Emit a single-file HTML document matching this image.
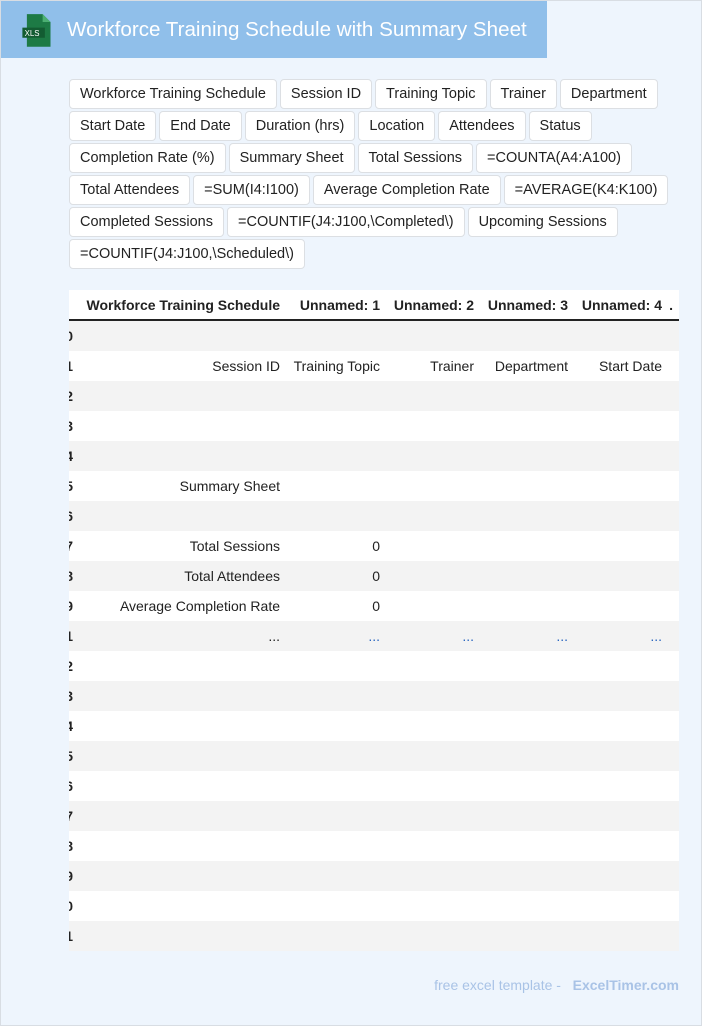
<!DOCTYPE html>
<html><head><meta charset="utf-8"><style>
*{box-sizing:border-box;margin:0;padding:0}
body{width:702px;height:1026px;background:#eef5fd;font-family:"Liberation Sans",Arial,sans-serif;position:relative;overflow:hidden;border:1px solid #d8dde3}
.hdr{position:absolute;left:0;top:0;width:546px;height:57px;background:#90bfea;color:#fff;font-size:20.6px;line-height:57px;padding-left:66px}
.icon{position:absolute;left:20px;top:12px}
.tags{position:absolute;left:68px;top:78px;width:610px;display:flex;flex-wrap:wrap;gap:2px 3px}
.tag{background:#fff;border:1px solid #dcdfe3;border-radius:4px;height:30px;line-height:28px;padding:0 10px;font-size:14.5px;color:#222}
.tbl{position:absolute;left:68px;top:289px;width:610px;overflow:hidden;font-size:14px;color:#222}
.row{height:30px;display:flex;position:relative}
.row div{line-height:30px;text-align:right;padding-right:6px;flex:none}
.c0{width:217px}.c1{width:100px}.c2{width:94px}.c3{width:94px}.c4{width:94px}.c5{width:11px}
.h{font-weight:bold;border-bottom:2px solid #222;height:31px;background:#fff}
.g{background:#f3f3f3}.w{background:#fff}
.ix{position:absolute;left:-4px;top:0;font-weight:bold;width:8px;text-align:right!important;padding:0!important}
.dot{color:#2a66c0}
.foot{position:absolute;right:22px;top:976px;font-size:14px;color:#a9c3e6}
</style></head><body>
<div class="hdr">Workforce Training Schedule with Summary Sheet</div>
<svg class="icon" width="32" height="36" viewBox="0 0 28 32"><path d="M5 1h14l7 7v22H5z" fill="#1d7a45"/><path d="M19 1v7h7z" fill="#4caf72"/><rect x="1" y="13" width="20" height="9" fill="#135c32"/><text x="3" y="20.5" font-size="7" fill="#fff" font-family="Liberation Sans">XLS</text></svg>
<div class="tags">
<span class="tag">Workforce Training Schedule</span><span class="tag">Session ID</span><span class="tag">Training Topic</span><span class="tag">Trainer</span><span class="tag">Department</span>
<span class="tag">Start Date</span><span class="tag">End Date</span><span class="tag">Duration (hrs)</span><span class="tag">Location</span><span class="tag">Attendees</span><span class="tag">Status</span>
<span class="tag">Completion Rate (%)</span><span class="tag">Summary Sheet</span><span class="tag">Total Sessions</span><span class="tag">=COUNTA(A4:A100)</span>
<span class="tag">Total Attendees</span><span class="tag">=SUM(I4:I100)</span><span class="tag">Average Completion Rate</span><span class="tag">=AVERAGE(K4:K100)</span>
<span class="tag">Completed Sessions</span><span class="tag">=COUNTIF(J4:J100,\Completed\)</span><span class="tag">Upcoming Sessions</span>
<span class="tag">=COUNTIF(J4:J100,\Scheduled\)</span>
</div>
<div class="tbl">
<div class="row h"><div class="c0">Workforce Training Schedule</div><div class="c1">Unnamed: 1</div><div class="c2">Unnamed: 2</div><div class="c3">Unnamed: 3</div><div class="c4">Unnamed: 4</div><div class="c5">.</div></div>
<div class="row g"><span class="ix" style="line-height:30px">0</span></div>
<div class="row w"><span class="ix" style="line-height:30px">1</span><div class="c0">Session ID</div><div class="c1">Training Topic</div><div class="c2">Trainer</div><div class="c3">Department</div><div class="c4">Start Date</div></div>
<div class="row g"><span class="ix" style="line-height:30px">2</span></div>
<div class="row w"><span class="ix" style="line-height:30px">3</span></div>
<div class="row g"><span class="ix" style="line-height:30px">4</span></div>
<div class="row w"><span class="ix" style="line-height:30px">5</span><div class="c0">Summary Sheet</div></div>
<div class="row g"><span class="ix" style="line-height:30px">6</span></div>
<div class="row w"><span class="ix" style="line-height:30px">7</span><div class="c0">Total Sessions</div><div class="c1">0</div></div>
<div class="row g"><span class="ix" style="line-height:30px">8</span><div class="c0">Total Attendees</div><div class="c1">0</div></div>
<div class="row w"><span class="ix" style="line-height:30px">9</span><div class="c0">Average Completion Rate</div><div class="c1">0</div></div>
<div class="row g"><span class="ix" style="line-height:30px">1</span><div class="c0">...</div><div class="c1 dot">...</div><div class="c2 dot">...</div><div class="c3 dot">...</div><div class="c4 dot">...</div></div>
<div class="row w"><span class="ix" style="line-height:30px">2</span></div>
<div class="row g"><span class="ix" style="line-height:30px">3</span></div>
<div class="row w"><span class="ix" style="line-height:30px">4</span></div>
<div class="row g"><span class="ix" style="line-height:30px">5</span></div>
<div class="row w"><span class="ix" style="line-height:30px">6</span></div>
<div class="row g"><span class="ix" style="line-height:30px">7</span></div>
<div class="row w"><span class="ix" style="line-height:30px">8</span></div>
<div class="row g"><span class="ix" style="line-height:30px">9</span></div>
<div class="row w"><span class="ix" style="line-height:30px">0</span></div>
<div class="row g"><span class="ix" style="line-height:30px">1</span></div>
</div>
<div class="foot">free excel template - &nbsp;&nbsp;<b>ExcelTimer.com</b></div>
</body></html>
